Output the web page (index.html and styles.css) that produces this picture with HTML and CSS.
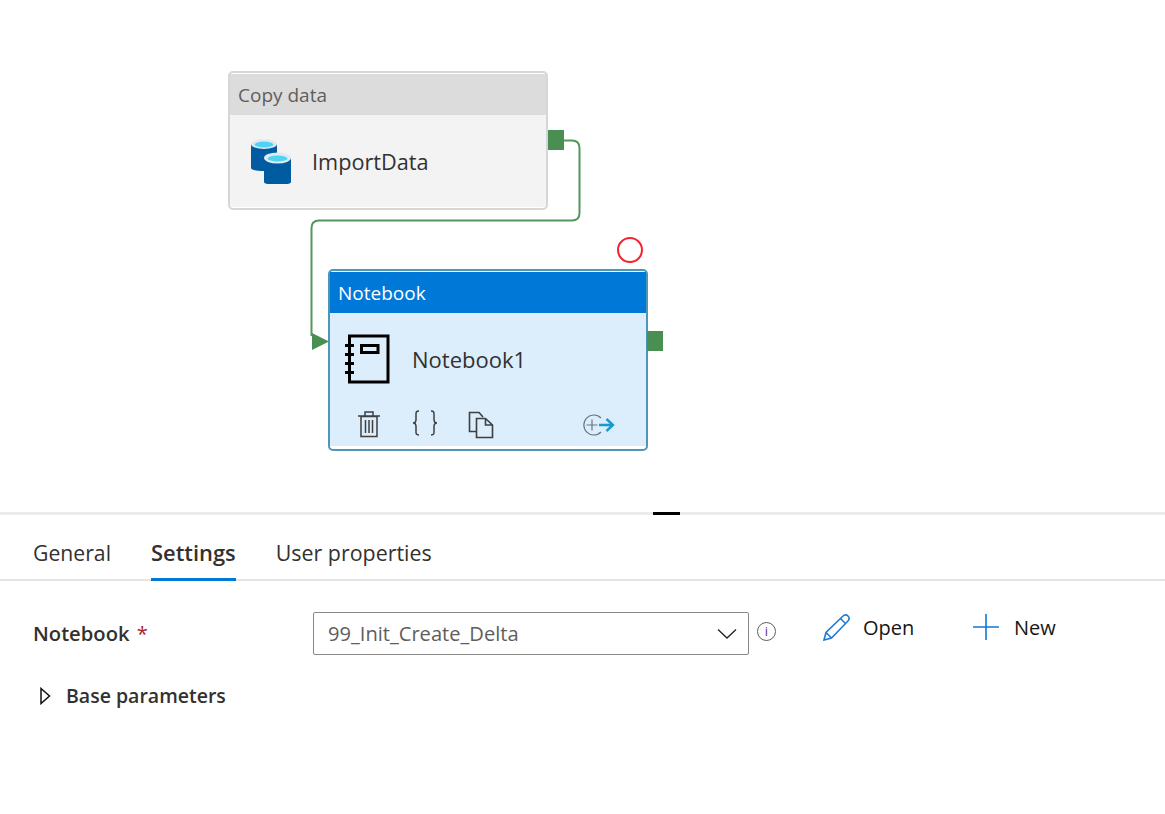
FILE: index.html
```html
<!DOCTYPE html>
<html lang="en">
<head>
    <meta charset="UTF-8">
    <title>Notebook activity settings</title>
    <link rel="stylesheet" href="styles.css">
</head>
<body>
<div class="canvas">
    <!-- connector between the two activities -->
    <svg class="wires" width="700" height="513">
        <path d="M564 140.500H572Q579.500 140.500 579.500 148V213Q579.500 220.500 572 220.500H319Q311.500 220.500 311.500 228V336" fill="none" stroke="#55965c" stroke-width="2"/>
        <path d="M312 333L329 341.500L312 350Z" fill="#4a8f52"/>
    </svg>

    <div class="node node-copy">
        <div class="node-head">Copy data</div>
        <div class="node-body">
            <svg class="db-icon" width="42" height="46" viewBox="0 0 42 46">
                <path d="M1 6V30C1 34 27 34 27 30V6Z" fill="#005ba1"/>
                <ellipse cx="14" cy="6" rx="13" ry="5" fill="#dfeaf3"/>
                <ellipse cx="14" cy="6.500" rx="9.500" ry="3" fill="#50d4f2"/>
                <path d="M14 20V44C14 48 41 48 41 44V20Z" fill="#005ba1"/>
                <ellipse cx="27.500" cy="20" rx="13.500" ry="5.500" fill="#dfeaf3"/>
                <ellipse cx="27.500" cy="20.500" rx="10" ry="3" fill="#50d4f2"/>
            </svg>
            <span class="node-name">ImportData</span>
        </div>
        <div class="port port-copy"></div>
    </div>

    <div class="ring"></div>

    <div class="node node-book">
        <div class="node-head">Notebook</div>
        <div class="node-body">
            <svg class="book-icon" width="45" height="50" viewBox="0 0 45 50">
                <path d="M4.500 2H43V48H4.500Z" fill="none" stroke="#000" stroke-width="3"/>
                <path d="M16.500 11.500H33V18.500H16.500Z" fill="none" stroke="#000" stroke-width="3"/>
                <path d="M0 11.500H9M0 20.500H9M0 29.500H9M0 38.500H9" stroke="#000" stroke-width="3"/>
            </svg>
            <span class="node-name">Notebook1</span>
        </div>
        <div class="node-tools">
            <svg class="tool tool-trash" width="24" height="28" viewBox="0 0 24 28">
                <path d="M4 6.500H20V26.500H4ZM1 6H23M8 5.500V2H16V5.500M8.500 10V23M12 10V23M15.500 10V23" fill="none" stroke="#3f3f3f" stroke-width="1.500"/>
            </svg>
            <svg class="tool tool-brace" width="26" height="26" viewBox="0 0 26 26">
                <path d="M7 1C3.500 1 4 3 4 6V9.500C4 11.500 3.500 13 1 13C3.500 13 4 14.500 4 16.500V20C4 23 3.500 25 7 25M19 1C22.500 1 22 3 22 6V9.500C22 11.500 22.500 13 25 13C22.500 13 22 14.500 22 16.500V20C22 23 22.500 25 19 25" fill="none" stroke="#3f3f3f" stroke-width="1.500"/>
            </svg>
            <svg class="tool tool-copy" width="26" height="28" viewBox="0 0 26 28">
                <path d="M8 20.500H1.500V1.500H11L15 6M8.500 7.500H17.500L24.500 14V26.500H8.500ZM17.500 7.500V14H24.500" fill="none" stroke="#3f3f3f" stroke-width="1.600"/>
            </svg>
            <svg class="tool tool-add" width="34" height="24" viewBox="0 0 34 24">
                <path d="M20 5A10 10 0 1 0 20 19M5.500 12H16.500M11 6.500V17.500" fill="none" stroke="#6b7680" stroke-width="1.200"/>
                <path d="M18 12H31M25.500 6L32 12L25.500 18" fill="none" stroke="#159ccf" stroke-width="2.400"/>
            </svg>
        </div>
        <div class="port port-book"></div>
    </div>
</div>

<div class="splitter"><div class="splitter-grip"></div></div>

<div class="tabs">
    <div class="tab">General</div>
    <div class="tab tab-active">Settings</div>
    <div class="tab tab-user">User properties</div>
</div>

<div class="form">
    <div class="form-row">
        <label class="form-label">Notebook <span class="required">*</span></label>
        <div class="select">
            <span>99_Init_Create_Delta</span>
            <svg width="20" height="12" viewBox="0 0 20 12">
                <path d="M1 1.500L10 10L19 1.500" fill="none" stroke="#222" stroke-width="1.300"/>
            </svg>
        </div>
        <div class="info">i</div>
        <div class="action action-open">
            <svg width="27" height="27" viewBox="0 0 27 27">
                <path d="M1 26L3 18.500L19.500 2.500C21.500 .5 23.500 .5 25 2C26.500 3.500 26.500 5.500 24.500 7.500L8.500 24ZM3 18.500L8.500 24M17.500 4.500L22.500 9.500" fill="none" stroke="#1f7ad4" stroke-width="1.600"/>
            </svg>
            Open
        </div>
        <div class="action action-new">
            <svg width="26" height="26" viewBox="0 0 26 26">
                <path d="M0 13H26M13 0V26" fill="none" stroke="#0f78d4" stroke-width="1.600"/>
            </svg>
            New
        </div>
    </div>
    <div class="expander">
        <svg width="12" height="18" viewBox="0 0 12 18">
            <path d="M2 1.500L10.500 9L2 16.500Z" fill="none" stroke="#111" stroke-width="1.500"/>
        </svg>
        Base parameters
    </div>
</div>
</body>
</html>
```

FILE: styles.css
```css
body {
    margin: 0;
    background: #fff;
    font-family: "Open Sans", "Noto Sans", sans-serif;
    color: #323130;
}

/* pipeline canvas */
.canvas {
    position: relative;
    height: 512px;
}
.wires {
    position: absolute;
    left: 0;
    top: 0;
}
.node {
    position: absolute;
    box-sizing: border-box;
    width: 320px;
    border: 2px solid #d6d6d6;
    border-radius: 5px;
    background: #fff;
    padding: 1px 0;
}
.node-copy {
    left: 228px;
    top: 71px;
    height: 139px;
}
.node-book {
    left: 328px;
    top: 269px;
    height: 182px;
    border-color: #4c97b6;
}
.node-head {
    height: 41px;
    line-height: 42px;
    padding-left: 8px;
    font-size: 19px;
    background: #dcdcdc;
    color: #605e5c;
}
.node-book .node-head {
    background: #0078d7;
    color: #fff;
}
.node-body {
    display: flex;
    align-items: center;
    background: #f3f3f3;
    height: 92px;
}
.node-book .node-body {
    background: #dcedfc;
    height: 92px;
}
.node-name {
    font-size: 21.700px;
    color: #323130;
}
.node-book .node-name {
    font-size: 22px;
}
.db-icon {
    margin: 0 20px 0 20px;
}
.book-icon {
    margin: 0 22px 0 15px;
}
.node-tools {
    position: relative;
    height: 41px;
    background: #dcedfc;
}
.tool {
    position: absolute;
}
.tool-trash {
    left: 27px;
    top: 5px;
}
.tool-brace {
    left: 82px;
    top: 5px;
}
.tool-copy {
    left: 138px;
    top: 6px;
}
.tool-add {
    left: 251px;
    top: 8px;
}
.port {
    position: absolute;
    width: 16px;
    height: 20px;
    background: #4a8f52;
}
.port-copy {
    left: 318px;
    top: 57px;
}
.port-book {
    left: 317px;
    top: 60px;
}
.ring {
    position: absolute;
    left: 617px;
    top: 237px;
    width: 22px;
    height: 22px;
    border: 2px solid #f5222d;
    border-radius: 50%;
}

/* divider between canvas and properties */
.splitter {
    height: 3px;
    background: #ececec;
    display: flex;
    padding-left: 653px;
}
.splitter-grip {
    width: 27px;
    background: #000;
}

.tabs {
    display: flex;
    gap: 40px;
    height: 66px;
    box-sizing: border-box;
    padding-left: 33px;
    border-bottom: 2px solid #e4e4e4;
}
.tab {
    font-size: 21.200px;
    line-height: 76px;
    height: 66px;
    box-sizing: border-box;
}
.tab-active {
    font-size: 21.900px;
    font-weight: 600;
    border-bottom: 3px solid #0078d4;
}
.tab-user {
    font-size: 21.400px;
}

.form {
    padding: 31px 0 0 33px;
}
.form-row {
    display: flex;
    align-items: center;
    height: 43px;
}
.form-label {
    width: 280px;
    margin-top: -2px;
    font-size: 20.200px;
    font-weight: 600;
}
.required {
    color: #a4262c;
    font-weight: 400;
    margin-left: 2px;
}
.select {
    box-sizing: border-box;
    width: 436px;
    height: 43px;
    border: 1px solid #8a8886;
    border-radius: 2px;
    padding: 0 11px 0 14px;
    display: flex;
    align-items: center;
    justify-content: space-between;
    font-size: 20.100px;
    color: #605e5c;
}
.info {
    box-sizing: border-box;
    width: 19px;
    height: 19px;
    margin: -4px 0 0 8px;
    border: 1.500px solid #605e5c;
    border-radius: 50%;
    font-size: 13px;
    line-height: 16px;
    text-align: center;
    color: #5c2d91;
}
.action {
    display: flex;
    align-items: center;
    gap: 14px;
    font-size: 20px;
    color: #161616;
    margin-top: -13px;
}
.action-open {
    margin-left: 47px;
    gap: 13px;
    width: 150px;
}
.action-new {
    gap: 15px;
}
.expander {
    display: flex;
    align-items: center;
    gap: 15px;
    margin: 27px 0 0 6px;
    font-size: 19.500px;
    font-weight: 600;
}
```
